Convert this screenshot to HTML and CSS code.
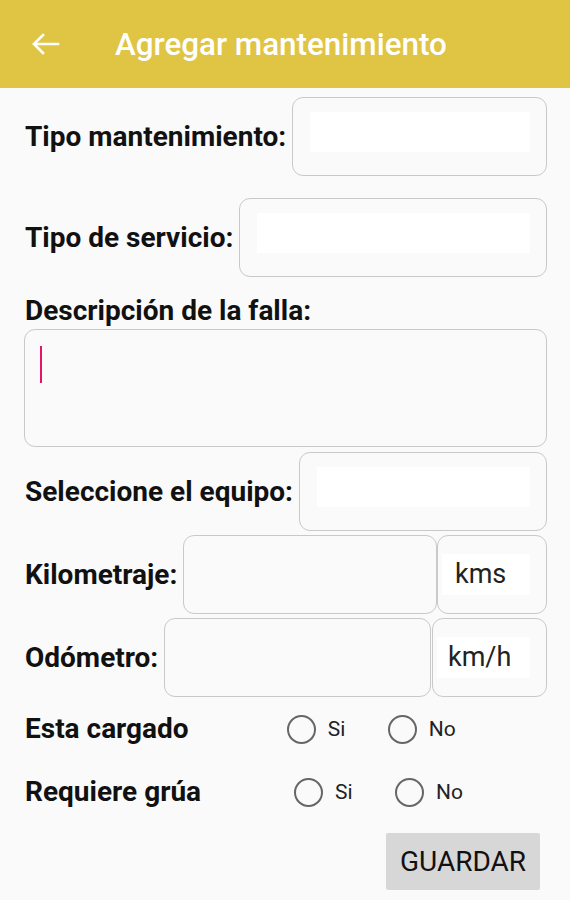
FILE: index.html
```html
<!DOCTYPE html>
<html lang="es">
<head>
<meta charset="utf-8">
<title>Agregar mantenimiento</title>
<link rel="stylesheet" href="styles.css">
</head>
<body>
<header class="appbar">
  <svg class="back" viewBox="0 0 30 24" width="30" height="24" aria-hidden="true">
    <path d="M13 3 L4 12 L13 21 M4 12 H28" fill="none" stroke="#fff" stroke-width="2.6" stroke-linecap="square" stroke-linejoin="miter"/>
  </svg>
  <h1 class="title">Agregar mantenimiento</h1>
</header>
<main class="form">
  <div class="row row-tipo">
    <span class="label">Tipo mantenimiento:</span>
    <div class="field"><span class="fill"></span></div>
  </div>
  <div class="row row-servicio">
    <span class="label">Tipo de servicio:</span>
    <div class="field"><span class="fill"></span></div>
  </div>
  <div class="label desc-label">Descripción de la falla:</div>
  <div class="textarea"><span class="cursor"></span></div>
  <div class="row row-equipo">
    <span class="label">Seleccione el equipo:</span>
    <div class="field"><span class="fill"></span></div>
  </div>
  <div class="row row-km">
    <span class="label">Kilometraje:</span>
    <div class="field"></div>
    <div class="unit unit-kms"><span class="unit-text">kms</span></div>
  </div>
  <div class="row row-odo">
    <span class="label">Odómetro:</span>
    <div class="field"></div>
    <div class="unit unit-kmh"><span class="unit-text">km/h</span></div>
  </div>
  <div class="radio-row row-cargado">
    <span class="label">Esta cargado</span>
    <div class="radios radios-cargado">
      <span class="radio"><span class="circle"></span>Si</span>
      <span class="radio"><span class="circle"></span>No</span>
    </div>
  </div>
  <div class="radio-row row-grua">
    <span class="label">Requiere grúa</span>
    <div class="radios radios-grua">
      <span class="radio"><span class="circle"></span>Si</span>
      <span class="radio"><span class="circle"></span>No</span>
    </div>
  </div>
  <div class="actions">
    <button class="btn" type="button">GUARDAR</button>
  </div>
</main>
</body>
</html>
```

FILE: styles.css
```css
* { box-sizing: border-box; }
html, body { margin: 0; padding: 0; }
body {
  width: 570px;
  height: 900px;
  background: #fafafa;
  font-family: Roboto, "Noto Sans", "Liberation Sans", sans-serif;
  color: #111;
  overflow: hidden;
}
.appbar {
  height: 88px;
  background: #e0c444;
  display: flex;
  align-items: center;
}
.back {
  margin-left: 30px;
  margin-top: 0;
  flex: none;
}
.title {
  margin: 2px 0 0 55px;
  font-size: 31.4px;
  font-weight: 500;
  color: #fff;
  line-height: 40px;
}
.form {
  padding: 0 23px 0 25px;
}
.label {
  font-size: 28px;
  line-height: 34px;
  font-weight: 700;
  color: #111;
  white-space: nowrap;
  flex: none;
}
.row {
  display: flex;
  align-items: center;
  height: 79px;
}
.row .field { margin-left: 6px; }
.row-tipo { margin-top: 9px; }
.row-servicio { margin-top: 22px; }
.field {
  flex: 1;
  height: 100%;
  border: 1.5px solid #c9c9c9;
  border-radius: 11px;
  background: #fafafa;
  display: flex;
}
.fill {
  flex: 1;
  background: #fff;
  margin: 14px 16px 23px 17px;
}
.desc-label {
  margin-top: 17px;
}
.textarea {
  margin-top: 1px;
  margin-left: -1px;
  height: 118px;
  border: 1.5px solid #c9c9c9;
  border-radius: 11px;
  padding: 16px 0 0 15px;
}
.cursor {
  display: block;
  width: 2px;
  height: 37px;
  background: #e2156b;
}
.row-equipo { margin-top: 5px; }
.row-km { margin-top: 4px; }
.row-odo { margin-top: 4px; }
.unit {
  flex: none;
  height: 100%;
  border: 1.5px solid #c9c9c9;
  border-radius: 11px;
  display: flex;
  align-items: center;
  padding: 0 16px 0 4px;
}
.unit-kms { width: 110px; }
.unit-kmh { width: 115px; margin-left: 1px; }
.unit-text {
  flex: 1;
  font-size: 27px;
  line-height: 41px;
  color: #222;
  background: #fff;
  padding-left: 13px;
}
.unit-kmh .unit-text { padding-left: 11px; }
.radio-row {
  display: flex;
  align-items: center;
  height: 44px;
}
.row-cargado { margin-top: 10px; }
.row-grua { margin-top: 19px; }
.radios { display: flex; }
.radios-cargado { margin-left: 98px; }
.radios-grua { margin-left: 93px; }
.radio {
  display: flex;
  align-items: center;
  width: 101px;
  font-size: 21px;
  color: #222;
}
.circle {
  width: 29px;
  height: 29px;
  border: 2.5px solid #666;
  border-radius: 50%;
  margin-right: 12px;
}
.actions {
  display: flex;
  justify-content: flex-end;
  margin-top: 19px;
  padding-right: 7px;
}
.btn {
  width: 154px;
  height: 57px;
  background: #d7d7d7;
  border: none;
  border-radius: 2px;
  font-family: Roboto, "Noto Sans", "Liberation Sans", sans-serif;
  font-size: 28px;
  color: #111;
  padding: 0;
}
```
